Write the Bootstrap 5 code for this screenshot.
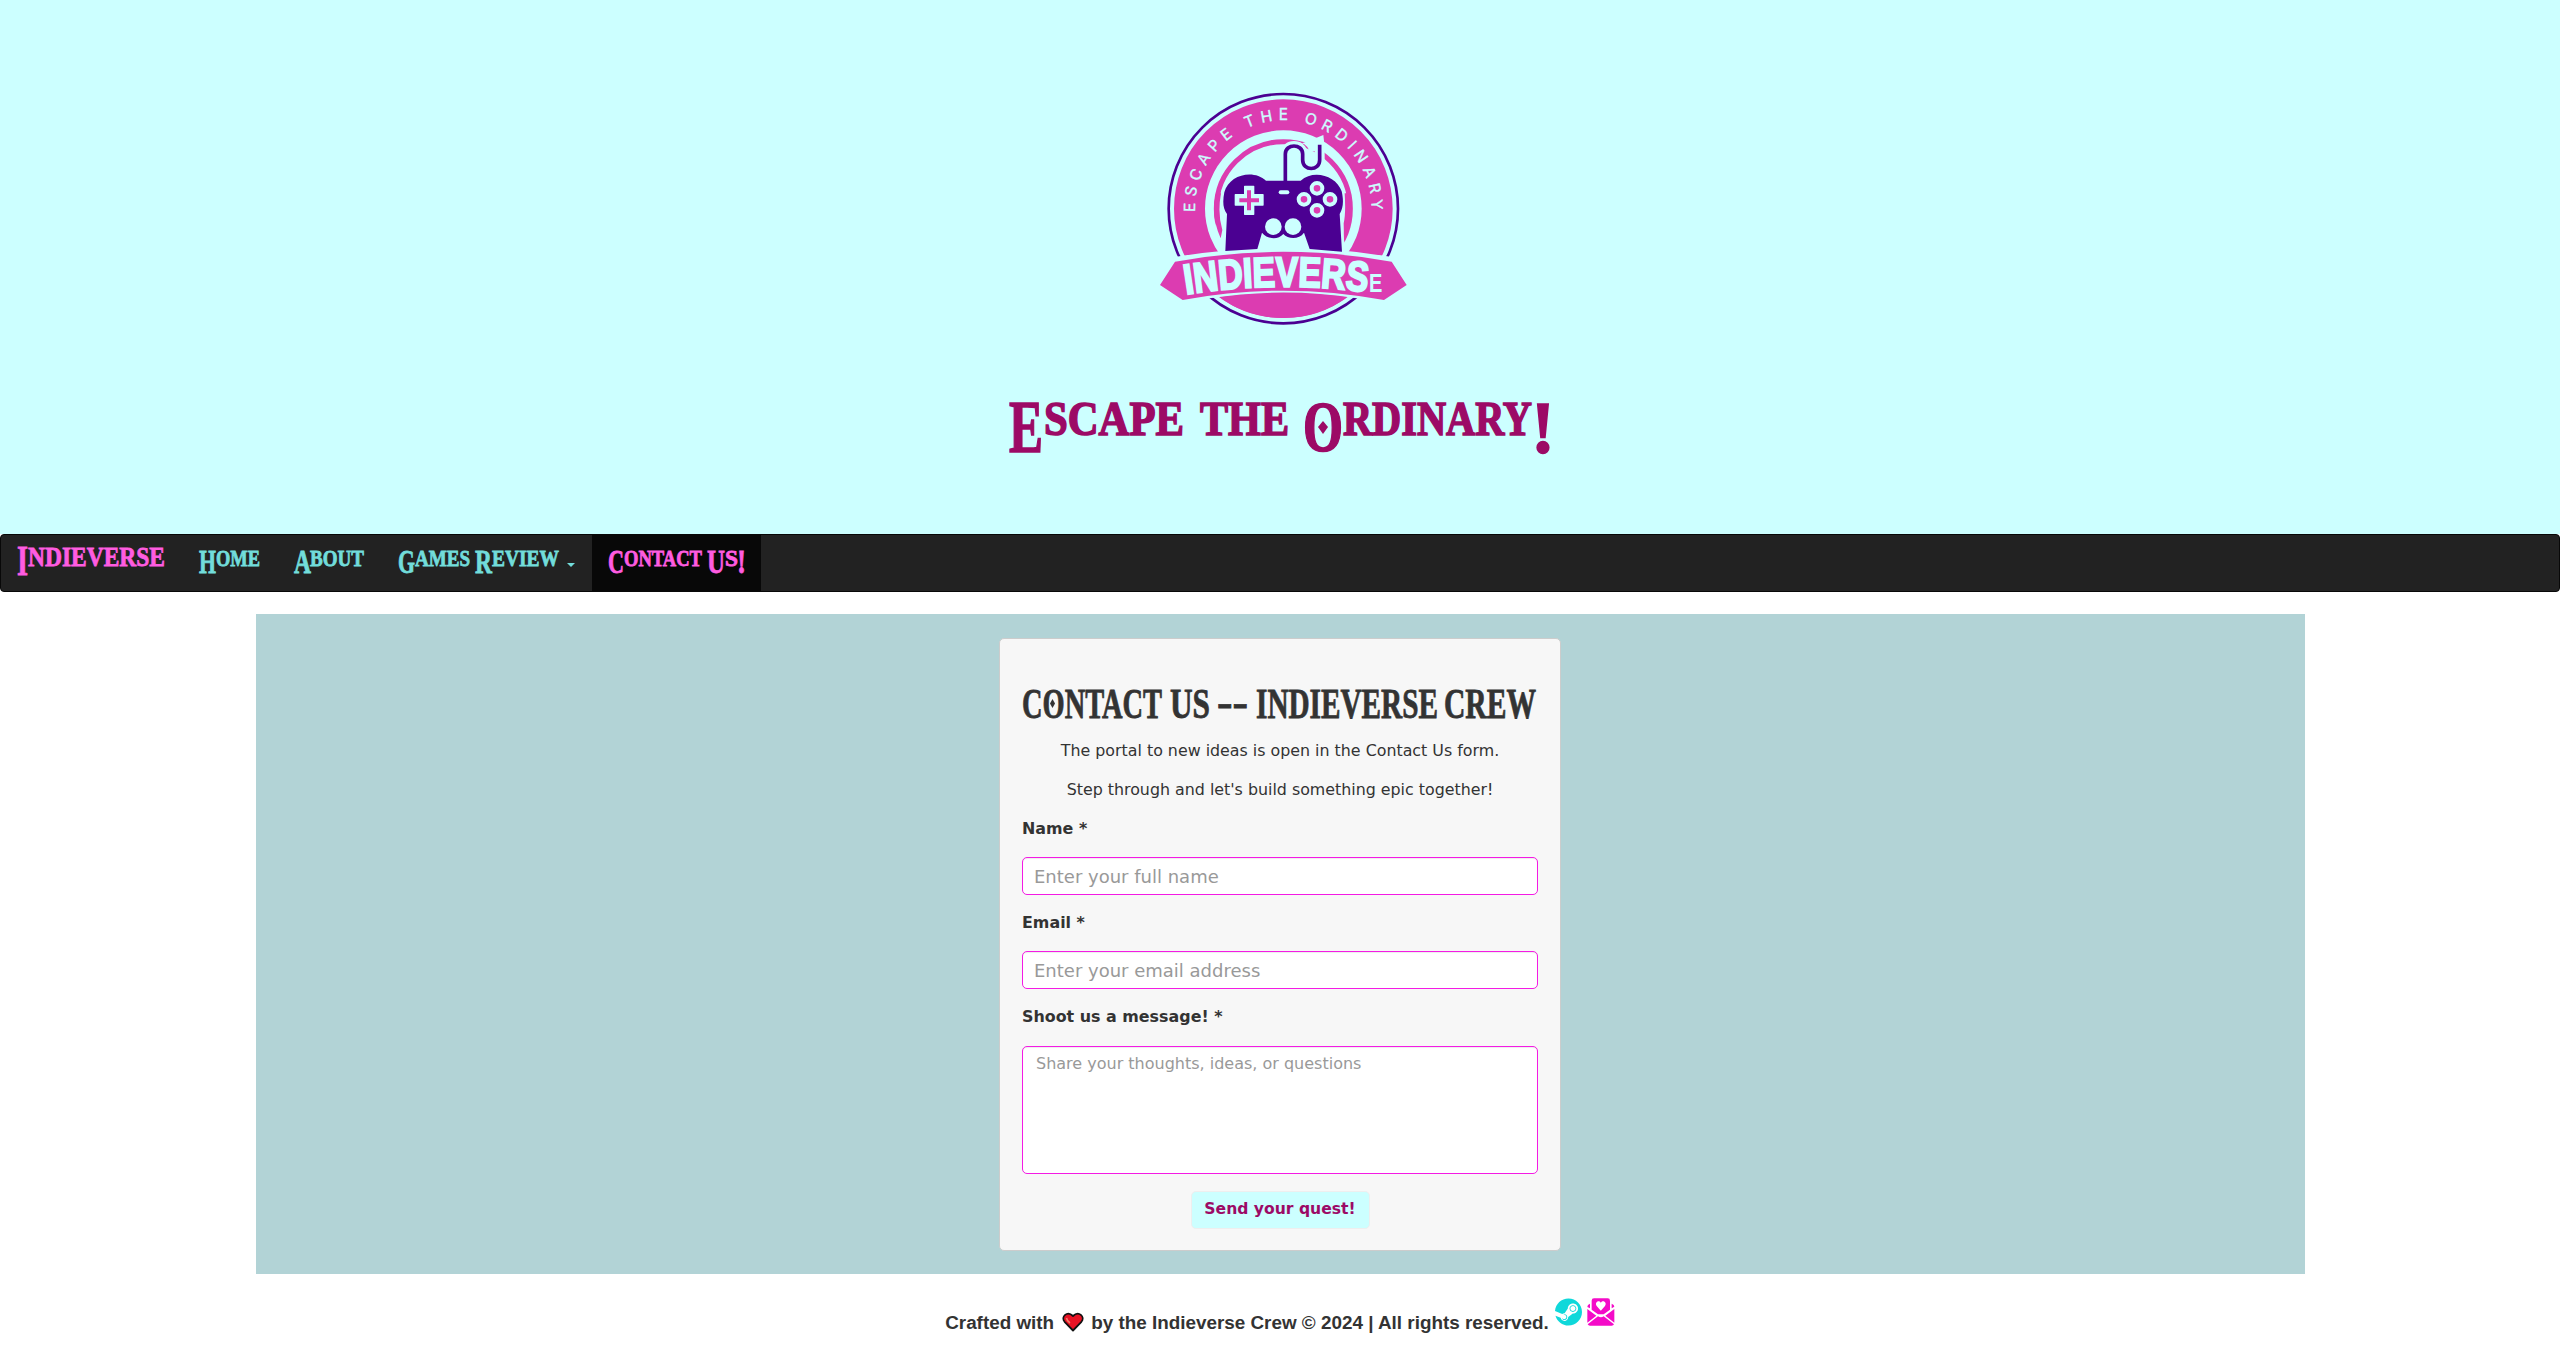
<!DOCTYPE html>
<html lang="en">
<head>
<meta charset="utf-8">
<title>Contact Us - Indieverse</title>
<link rel="stylesheet" href="https://cdn.jsdelivr.net/npm/bootstrap@5.3.0/dist/css/bootstrap.min.css">
<style>
body{font-family:"Liberation Sans",Arial,sans-serif;color:#333;background:#fff;line-height:1.43}
.hero{height:534px;padding-top:80px;background:#cff;color:#9c0a66}
.hero .slogan{margin-top:40px;stroke-width:1.6}
.fancy{font-family:"Liberation Serif","Times New Roman",serif;font-weight:700;fill:currentColor;stroke:currentColor;stroke-width:.8;overflow:visible}
svg{display:block;flex:none}
svg text{text-transform:uppercase;white-space:pre}
.site-nav{height:58px;margin-bottom:22px;background:#222;border:1px solid #080808;border-radius:4px;padding:0}
.site-nav .navbar-brand{width:183px;color:#ff5ce1;padding:0;margin:0}
.site-nav .nav-link{height:56px;padding:0;color:#72dddb}
.site-nav .nav-link.active{background:#080808;color:#ff5ce1}
.stage{width:2049px;height:660px;padding-top:24px;background:#b2d3d6}
.quest-card{width:562px;height:613px;padding:0 22px;background:#f7f7f7;border:1px solid #ccc;border-radius:5px;font-family:"DejaVu Sans",Verdana,sans-serif;font-size:15.85px}
.quest-card h1{margin:42px 0 0;height:57px}
.quest-card p{margin:0;height:39px;line-height:25px}
.quest-card label{font-weight:700;height:40px;line-height:24px;margin:1px 0 0;display:block;font-size:15.9px}
.quest-card .form-control{border:1px solid #f41be4;border-radius:5px;height:38px;padding:0 11px;font-size:18px;color:#555;margin-bottom:16px;box-shadow:inset 0 1px 1px rgba(0,0,0,.075)}
.quest-card textarea.form-control{height:128px;margin-top:1px;padding:5px 13px;font-size:16px;resize:none;margin-bottom:17px}
.form-control::placeholder{color:#999}
.btn-quest{width:179px;height:38px;padding:0;background:#cff;border:1px solid #eee;border-radius:5px;color:#9c0a66;font-weight:700;font-size:15.6px}
.site-foot{height:74px;padding-top:24px;font-size:18.88px;font-weight:700;line-height:26px}
.site-foot .line{padding-top:12px}
.site-foot .heart{margin:14px 7px 0 8px}
</style>
</head>
<body>
<header class="hero d-flex flex-column align-items-center">
<svg width="280" height="260" viewBox="0 0 840 780" aria-label="Indieverse logo">
  <defs>
    <path id="arcTop" d="M165 396V386A265 265 0 0 1 695 386V396"/>
    <path id="arcName" d="M138 643Q430 596 726 643"/>
  </defs>
  <circle cx="430" cy="386" r="344" fill="none" stroke="#4b0092" stroke-width="8"/>
  <circle cx="430" cy="386" r="281.5" fill="none" stroke="#dc3cb1" stroke-width="93"/>
  <circle cx="430" cy="386" r="201" fill="none" stroke="#dc3cb1" stroke-width="15"/>
  <path d="M436 205Q445 185 462 185Q500 185 510 215L555 210L550 165L500 185" fill="#cff"/>
  <path d="M245 330L218 480L240 520H620L612 480L610 330Z" fill="#cff"/>
  <path d="M228 340Q212 410 242 475L247 450Q232 400 243 340ZM628 340Q640 400 612 475L611 430Q618 400 614 340Z" fill="#dc3cb1"/>
  <path d="M436 305V222C436 190 488 190 488 222V240C488 274 539 274 539 240V194" fill="none" stroke="#cff" stroke-width="30"/>
  <path d="M100 532Q430 475 760 532L820 620L740 674L650 655Q430 620 210 655L120 674L40 620Z" fill="#cff"/>
  <path d="M240 652Q430 628 620 652Q540 714 430 714Q320 714 240 652Z" fill="#dc3cb1"/>
  <path d="M105 545Q430 486 755 545L800 615L732 660Q430 604 128 660L60 615Z" fill="#dc3cb1"/>
  <path d="M436 305V222C436 190 488 190 488 222V240C488 274 539 274 539 240V194" fill="none" stroke="#4b0092" stroke-width="11"/>
  <path d="M256 513L261 402C248 385 248 363 253 337C267 283 341 267 378 302H482C520 267 589 286 605 334C612 365 609 385 599 402L606 515L509 507L492 458C477 480 444 478 430 462C414 481 380 477 366 458L352 507Z" fill="#4b0092"/>
  <path d="M314 319H341V344H369V375H341V403H314V375H286V344H314Z" fill="#cff" stroke="#cff" stroke-width="4" stroke-linejoin="round"/>
  <path d="M321 331H333V355H357V367H333V391H321V367H298V355H321Z" fill="#dc3cb1"/>
  <rect x="416" y="331" width="32" height="12" rx="6" fill="#cff"/>
  <g fill="#dc3cb1" stroke="#cff" stroke-width="12"><circle cx="531" cy="325" r="16"/><circle cx="492" cy="358" r="16"/><circle cx="570" cy="358" r="16"/><circle cx="531" cy="391" r="16"/></g>
  <g fill="#cff"><circle cx="400" cy="440" r="25"/><circle cx="459" cy="440" r="25"/></g>
  <text font-family="Inter" font-size="46" fill="#cff" stroke="#cff" stroke-width="1"><textPath href="#arcTop" textLength="846">Escape the Ordinary</textPath></text>
  <text font-family="Liberation Sans" font-weight="700" font-size="126" fill="#cff" stroke="#cff" stroke-width="7"><textPath href="#arcName" textLength="545" lengthAdjust="spacingAndGlyphs">Indievers</textPath></text>
  <text x="687" y="637" font-family="Liberation Sans" font-weight="700" font-size="78" fill="#cff" stroke="#dc3cb1" stroke-width="8" paint-order="stroke" textLength="40" lengthAdjust="spacingAndGlyphs">e</text>
</svg>
<svg class="slogan fancy" width="580" height="90" viewBox="990 380 580 90">
  <text x="1009" y="452" font-size="74" textLength="34" lengthAdjust="spacingAndGlyphs">E</text>
  <text x="1044" y="435" font-size="49" textLength="140" lengthAdjust="spacingAndGlyphs">scape</text>
  <text x="1200" y="435" font-size="49" textLength="89" lengthAdjust="spacingAndGlyphs">the</text>
  <text x="1303" y="451" font-size="71" textLength="40" lengthAdjust="spacingAndGlyphs">O</text>
  <path d="M1323 421L1328 427L1323 434L1318 427Z" stroke="none"/>
  <text x="1343" y="435" font-size="49" textLength="189" lengthAdjust="spacingAndGlyphs">rdinary</text>
  <text x="1531" y="453" font-size="74" textLength="24" lengthAdjust="spacingAndGlyphs">!</text>
</svg>
</header>
<nav class="navbar site-nav d-flex flex-nowrap justify-content-start align-items-start">
  <a class="navbar-brand" href="#"><svg class="fancy" width="183" height="56" viewBox="1 535 183 56">
    <text x="17" y="575" font-size="42" textLength="11" lengthAdjust="spacingAndGlyphs">I</text>
    <text x="28" y="566" font-size="28" textLength="137" lengthAdjust="spacingAndGlyphs">ndieverse</text></svg></a>
  <ul class="nav flex-nowrap">
  <li><a class="nav-link" href="#"><svg class="fancy" width="94" height="56" viewBox="184 535 94 56">
    <text x="199" y="573" font-size="34" textLength="17" lengthAdjust="spacingAndGlyphs">H</text>
    <text x="216" y="565.5" font-size="23" textLength="44" lengthAdjust="spacingAndGlyphs">ome</text></svg></a></li>
  <li><a class="nav-link" href="#"><svg class="fancy" width="104" height="56" viewBox="278 535 104 56">
    <text x="294" y="573" font-size="34" textLength="17" lengthAdjust="spacingAndGlyphs">A</text>
    <text x="310" y="565.5" font-size="23" textLength="54" lengthAdjust="spacingAndGlyphs">bout</text></svg></a></li>
  <li><a class="nav-link" href="#"><svg class="fancy" width="210" height="56" viewBox="382 535 210 56">
    <text x="398" y="573" font-size="33" textLength="17" lengthAdjust="spacingAndGlyphs">G</text>
    <text x="415" y="565.5" font-size="23" textLength="55" lengthAdjust="spacingAndGlyphs">ames</text>
    <text x="475" y="573" font-size="34" textLength="17" lengthAdjust="spacingAndGlyphs">R</text>
    <text x="492" y="565.5" font-size="23" textLength="67" lengthAdjust="spacingAndGlyphs">eview</text>
    <path d="M567 563H575L571 567Z" stroke="none"/></svg></a></li>
  <li><a class="nav-link active" href="#"><svg class="fancy" width="169" height="56" viewBox="592 535 169 56">
    <text x="608" y="573" font-size="33" textLength="16" lengthAdjust="spacingAndGlyphs">C</text>
    <text x="624" y="565.5" font-size="23" textLength="78" lengthAdjust="spacingAndGlyphs">ontact</text>
    <text x="707" y="573" font-size="34" textLength="18" lengthAdjust="spacingAndGlyphs">U</text>
    <text x="725" y="565.5" font-size="23" textLength="13" lengthAdjust="spacingAndGlyphs">s</text>
    <text x="737" y="573" font-size="34" textLength="9" lengthAdjust="spacingAndGlyphs">!</text></svg></a></li>
  </ul>
</nav>
<main class="stage mx-auto">
  <form class="quest-card mx-auto">
    <h1><svg class="fancy" width="516" height="46" viewBox="1022 680 516 46">
      <text x="1022" y="717" font-size="42" textLength="140" lengthAdjust="spacingAndGlyphs">Contact</text>
      <path d="M1052.500 698L1055 702.500L1052.500 707L1050 702.500Z" stroke="none"/>
      <text x="1170" y="717" font-size="42" textLength="40" lengthAdjust="spacingAndGlyphs">us</text>
      <text x="1217" y="715" font-size="42" textLength="31" lengthAdjust="spacingAndGlyphs">--</text>
      <text x="1256" y="717" font-size="42" textLength="182" lengthAdjust="spacingAndGlyphs">Indieverse</text>
      <text x="1444" y="717" font-size="42" textLength="92" lengthAdjust="spacingAndGlyphs">Crew</text></svg></h1>
    <p class="text-center">The portal to new ideas is open in the Contact Us form.</p>
    <p class="text-center">Step through and let's build something epic together!</p>
    <label for="n">Name *</label><input id="n" class="form-control" placeholder="Enter your full name">
    <label for="e">Email *</label><input id="e" class="form-control" placeholder="Enter your email address">
    <label for="m">Shoot us a message! *</label><textarea id="m" class="form-control" placeholder="Share your thoughts, ideas, or questions"></textarea>
    <button type="button" class="btn btn-quest d-block mx-auto">Send your quest!</button>
  </form>
</main>
<footer class="site-foot d-flex justify-content-center align-items-start">
  <span class="line">Crafted with</span>
  <svg class="heart" width="22" height="20" viewBox="0 0 22 20"><path d="M11 18.5L2.6 9.8C-1.5 4.8 5.2-1.8 11 4C16.8-1.8 23.5 4.8 19.4 9.8Z" fill="#e81224" stroke="#111" stroke-width="1.8" stroke-linejoin="round"/><path d="M4.500 6Q5 9 8 11" fill="none" stroke="#f47b68" stroke-width="1.6"/></svg>
  <span class="line">by the Indieverse Crew © 2024 | All rights reserved.</span>
  <svg style="margin-left:6px" width="27" height="28" viewBox="0 0 496 512"><path fill="#0fd8da" d="M496 256c0 137-111.2 248-248.4 248-113.8 0-209.6-76.3-239-180.4l95.2 39.3c6.4 32.1 34.900 56.400 68.900 56.400 39.200 0 71.900-32.400 70.200-73.500l84.500-60.200c52.100 1.300 95.800-40.900 95.800-93.500 0-51.600-42-93.500-93.700-93.500s-93.700 42-93.700 93.500v1.200L176.600 279c-15.500-.9-30.700 3.400-43.500 12.100L0 236.100C10.200 108.400 117.100 8 247.600 8 384.800 8 496 119 496 256zM155.700 384.300l-30.500-12.600a52.790 52.790 0 0 0 27.200 25.800c26.900 11.200 57.800-1.600 69-28.500 5.400-13 5.500-27.300.1-40.300-5.400-13-15.500-23.200-28.500-28.600-12.900-5.400-26.700-5.200-38.900-.6l31.500 13c19.800 8.200 29.200 30.900 20.900 50.700-8.300 19.900-31 29.200-50.800 21.100zm173.800-129.900c-34.400 0-62.400-28-62.400-62.300s28-62.300 62.400-62.300 62.400 28 62.400 62.300-27.900 62.300-62.400 62.300zm.1-15.600c25.900 0 46.900-21 46.900-46.800 0-25.900-21-46.800-46.900-46.800s-46.900 21-46.900 46.800c.1 25.800 21.100 46.800 46.900 46.800z"/></svg>
  <svg style="margin-left:5px" width="28" height="28" viewBox="0 0 84 84"><g fill="#f40bc8"><path d="M14 8Q14 1 21 1H62Q69 1 69 8V35L50 49H33L14 35Z"/><path d="M1 26Q1 20 9 17V31L1 27ZM74 17Q82 20 82 26L74 31Z"/><path d="M1 33L28 53L1 74ZM82 33L55 53L82 74Z"/><path d="M2 79L33 55Q42 61 50 55L81 79Q79 83 74 83H9Q4 83 2 79Z"/></g><path d="M41.500 38L29 24C22 15 34 4 41.500 14C49 4 61 15 54 24Z" fill="#fff"/></svg>
</footer>
<script src="https://cdn.jsdelivr.net/npm/bootstrap@5.3.0/dist/js/bootstrap.bundle.min.js"></script>
</body>
</html>
